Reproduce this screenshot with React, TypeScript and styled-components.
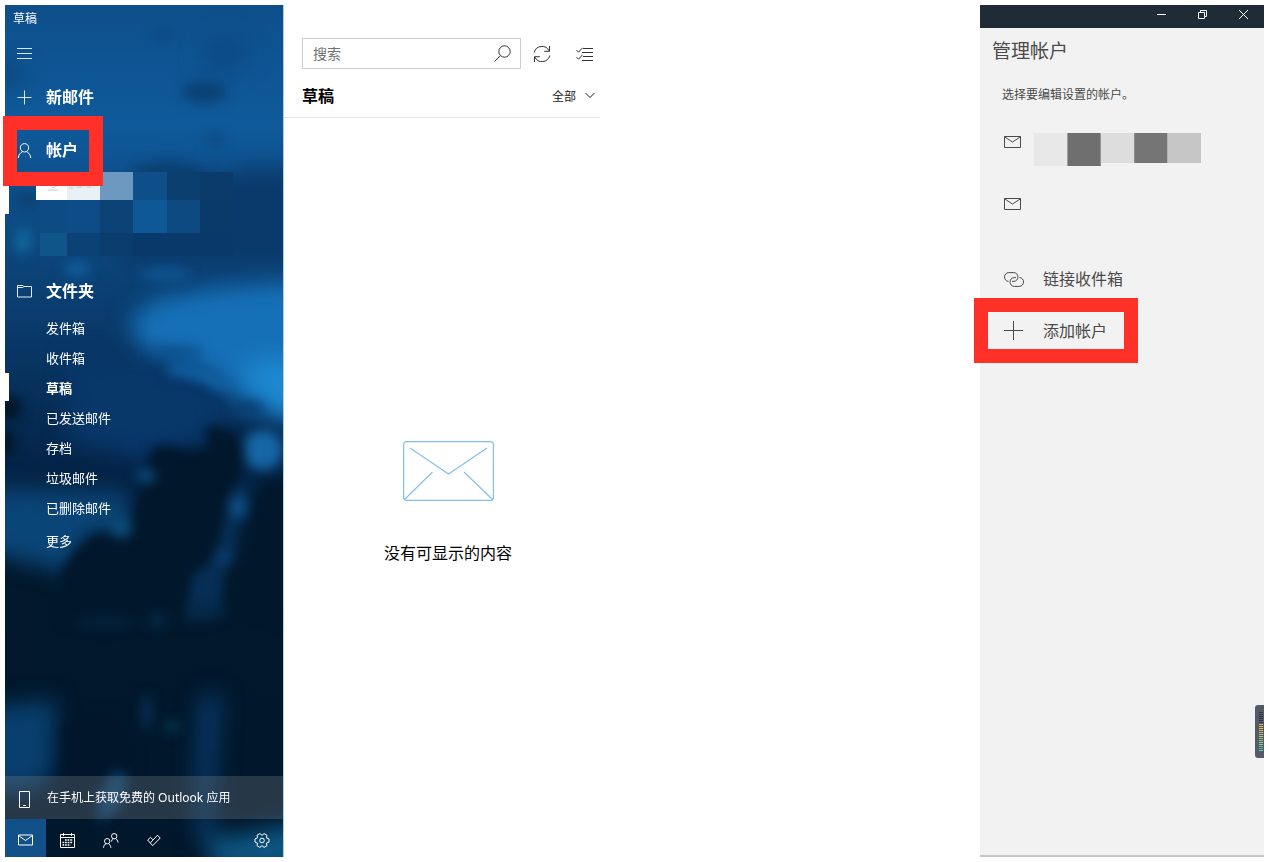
import React from 'react';
import styled, { createGlobalStyle, css } from 'styled-components';

const GlobalStyle = createGlobalStyle`
  *, *::before, *::after { box-sizing: border-box; }
  body {
    margin: 0;
    background: #ffffff;
    color: #000000;
    font-family: "Noto Sans", "Noto Sans CJK SC", sans-serif;
    font-size: 14px;
  }
  button, input, select { font: inherit; color: inherit; }
  svg { display: block; flex: none; }
`;

const Desktop = styled.div`
  display: flex;
  min-height: 100vh;
  padding: 5px;
`;

/* ---------- sidebar ---------- */

const Sidebar = styled.aside`
  position: relative;
  isolation: isolate;
  display: flex;
  flex-direction: column;
  flex: none;
  width: 278px;
  color: #ffffff;
`;

const Backdrop = styled.svg`
  position: absolute;
  inset: 0;
  z-index: -1;
  width: 100%;
  height: 100%;
`;

const WindowTitle = styled.div`
  height: 26px;
  padding-left: 8px;
  font-size: 12px;
  line-height: 28px;
`;

const plainButton = css`
  border: 0;
  background: none;
  padding: 0;
  cursor: pointer;
`;

const NavButton = styled.button<{ $gap?: number }>`
  ${plainButton}
  position: relative;
  display: flex;
  align-items: center;
  width: 100%;
  height: 44px;
  margin-top: ${(p) => p.$gap ?? 0}px;
  padding-left: 12px;
  gap: 14px;
  font-size: 16px;
  font-weight: 700;
  line-height: 24px;
  text-align: left;
`;

const Highlight = styled.span<{ $top: number; $left: number; $width: number; $height: number }>`
  position: absolute;
  z-index: 1;
  top: ${(p) => p.$top}px;
  left: ${(p) => p.$left}px;
  width: ${(p) => p.$width}px;
  height: ${(p) => p.$height}px;
  border: 14px solid #ff3028;
  pointer-events: none;
`;

const AccountMosaic = styled.svg`
  width: 100%;
  height: 84px;
  margin-bottom: 13px;
`;

const FolderList = styled.ul`
  list-style: none;
  margin: 0;
  padding: 0;
`;

const FolderLink = styled.a<{ $current?: boolean; $tall?: boolean }>`
  position: relative;
  display: block;
  padding-left: 41px;
  font-size: 13px;
  line-height: ${(p) => (p.$tall ? 36 : 30)}px;
  color: #ffffff;
  text-decoration: none;
  font-weight: ${(p) => (p.$current ? 700 : 400)};
  ${(p) =>
    p.$current &&
    css`
      &::before {
        content: '';
        position: absolute;
        left: 0;
        top: 0;
        width: 4px;
        height: 28px;
        background: #ffffff;
      }
    `}
`;

const Promo = styled.a`
  display: flex;
  align-items: center;
  gap: 13px;
  height: 43px;
  margin-top: auto;
  padding: 4px 0 0 10px;
  background: rgba(110, 120, 130, 0.34);
  color: #ffffff;
  font-size: 12px;
  line-height: 18px;
  text-decoration: none;
`;

const PromoText = styled.span`
  padding-bottom: 4px;
`;

const AppBar = styled.nav`
  display: flex;
  height: 38px;
`;

const AppButton = styled.button<{ $active?: boolean; $last?: boolean }>`
  ${plainButton}
  display: flex;
  align-items: center;
  justify-content: center;
  width: ${(p) => (p.$active ? 41 : 43)}px;
  margin-left: ${(p) => (p.$last ? 'auto' : 0)};
  padding-top: 4px;
  background: ${(p) => (p.$active ? '#115088' : 'none')};
`;

/* ---------- message list ---------- */

const ListPane = styled.main`
  display: flex;
  flex-direction: column;
  flex: none;
  width: 331px;
  border-left: 1px solid #b5cce0;
`;

const Toolbar = styled.div`
  display: flex;
  align-items: center;
  margin-top: 33px;
  padding-left: 18px;
`;

const SearchBox = styled.form`
  display: flex;
  align-items: center;
  width: 219px;
  height: 31px;
  border: 1px solid #cfcfcf;
`;

const SearchInput = styled.input`
  flex: 1;
  min-width: 0;
  height: 100%;
  padding: 0 0 1px 10px;
  border: 0;
  outline: 0;
  background: none;
  &::placeholder { color: #707070; opacity: 1; }
`;

const IconButton = styled.button`
  ${plainButton}
  display: flex;
  align-items: center;
  justify-content: center;
  width: 43px;
  height: 31px;
  padding-right: 2px;
  color: #333333;
`;

const SearchButton = styled(IconButton)`
  width: 37px;
  padding: 0 0 1px 1px;
`;

const ListHeader = styled.div`
  display: flex;
  align-items: center;
  justify-content: space-between;
  height: 49px;
  margin-right: 14px;
  padding: 6px 5px 0 18px;
  border-bottom: 1px solid #e6e6e6;
`;

const ListTitle = styled.h1`
  margin: 0;
  font-size: 16px;
  line-height: 24px;
`;

const FilterField = styled.label`
  position: relative;
  display: block;
  color: #1a1a1a;
  svg {
    position: absolute;
    right: 0;
    top: 6px;
    pointer-events: none;
  }
`;

const FilterSelect = styled.select`
  appearance: none;
  width: 43px;
  height: 20px;
  padding: 0;
  border: 0;
  background: none;
  font-size: 12px;
`;

const EmptyState = styled.section`
  display: flex;
  flex: 1;
  flex-direction: column;
  align-items: center;
  justify-content: center;
  gap: 40px;
  padding: 31px 2px 0 0;
  p { margin: 0; font-size: 16px; line-height: 24px; }
`;

/* ---------- account panel ---------- */

const Panel = styled.aside`
  position: relative;
  display: flex;
  flex-direction: column;
  flex: none;
  width: 284px;
  margin-left: auto;
  background: #f2f2f2;
  border-bottom: 2px solid #c6c6c6;
  color: #4a4a4a;
`;

const WindowBar = styled.div`
  display: flex;
  justify-content: flex-end;
  height: 23px;
  background: #1f2b37;
  color: #ffffff;
`;

const WindowButton = styled.button`
  ${plainButton}
  display: flex;
  justify-content: center;
  width: 41px;
  padding-top: 4px;
`;

const PanelTitle = styled.h2`
  margin: 9px 0 0 12px;
  font-size: 19px;
  font-weight: 400;
  line-height: 28px;
`;

const PanelHint = styled.p`
  margin: 20px 0 0 22px;
  font-size: 12px;
  line-height: 20px;
`;

const AccountList = styled.ul`
  list-style: none;
  margin: 6px 0 0;
  padding: 0;
`;

const AccountButton = styled.button`
  ${plainButton}
  display: flex;
  align-items: center;
  gap: 13px;
  width: 100%;
  height: 62px;
  padding-left: 24px;
`;

const PanelAction = styled.button<{ $gap: number }>`
  ${plainButton}
  position: relative;
  display: flex;
  align-items: center;
  gap: 19px;
  width: 100%;
  height: 36px;
  margin-top: ${(p) => p.$gap}px;
  padding-left: 24px;
  font-size: 16px;
  line-height: 24px;
`;

const LevelMeter = styled.svg`
  position: absolute;
  right: 0;
  bottom: 97px;
`;

/* ---------- icons ---------- */

type IconProps = { w: number; h: number; children: React.ReactNode };

const Icon = ({ w, h, children }: IconProps) => (
  <svg width={w} height={h} viewBox={`0 0 ${w} ${h}`} fill="none" stroke="currentColor" strokeLinejoin="round" aria-hidden="true">
    {children}
  </svg>
);

const MenuIcon = () => <Icon w={15} h={11}><path d="M0 .5h15M0 5.5h15M0 10.5h15" opacity=".85" /></Icon>;
const PlusIcon = () => <Icon w={15} h={15}><path d="M.5 7.5h14M7.5.5v14" opacity=".85" /></Icon>;
const BigPlusIcon = () => <Icon w={20} h={20}><path d="M0 9.5h19M9.5 0v19" /></Icon>;
const PersonIcon = () => (
  <Icon w={15} h={15}><circle cx="7.5" cy="4.8" r="4.2" /><path d="M1.2 15c.4-3.2 2-5.2 4.2-6.3M13.8 15c-.4-3.2-2-5.2-4.2-6.3" /></Icon>
);
const FolderIcon = () => (
  <Icon w={15} h={14}><path d="M.5 1.5h5.500l1 1h7.500v10.500H.5zM.5 3.500h5l1.500-1" opacity=".9" /></Icon>
);
const PhoneIcon = () => <Icon w={19} h={17}><path d="M4.5.5h10v16h-10zM8 14.500h3" /></Icon>;
const MailIcon = () => <Icon w={15} h={12}><path d="M.5 1h14v10H.5zM.5 1.500l7 5 7-5" /></Icon>;
const PanelMailIcon = () => <Icon w={17} h={12}><path d="M.5.5h16v11H.5zM.5.8l8 5.200 8-5.200" /></Icon>;
const CalendarIcon = () => (
  <Icon w={15} h={15}>
    <path d="M.5 1.500h14v13H.5zM.5 4.500h14M3.500 0v3M11.500 0v3" />
    <path d="M5 7h8M2.500 9.500H13M2.500 12h8" strokeWidth="1.600" strokeDasharray="1.700 .9" />
  </Icon>
);
const PeopleIcon = () => (
  <Icon w={16} h={15}>
    <circle cx="4.2" cy="8.2" r="2.700" /><path d="M.5 14.800c.2-2.200 1.300-3.600 2.500-4.200M7.900 14.800c-.2-2.200-1.300-3.600-2.500-4.200" />
    <circle cx="11.2" cy="3.2" r="2.700" /><path d="M8.500 8.500c.3-1.400.8-2.300 1.500-2.900M15 9.500c-.2-2-1.200-3.300-2.500-3.900" />
  </Icon>
);
const TodoIcon = () => (
  <Icon w={14} h={13}>
    <path d="M6 5.800L3.500 3.300.7 6.100l5 5.600M5.700 11.700l7.500-7.700-2.700-2.800-7 7.500" />
  </Icon>
);
const GearIcon = () => (
  <Icon w={16} h={15}>
    <path d="M15 9.100V5.900L12.500 4.900 12.900 2.200 10.100.6 8 2.300 5.900.6 3.100 2.200 3.500 4.900 1 5.900v3.200l2.500 1-.4 2.700 2.800 1.600L8 12.700l2.100 1.700 2.800-1.600-.4-2.700z" />
    <circle cx="8" cy="7.500" r="2.300" />
  </Icon>
);
const SearchIcon = () => <Icon w={17} h={17}><circle cx="10.5" cy="6.500" r="5.700" /><path d="M6.500 10.500L.6 16.400" /></Icon>;
const SyncIcon = () => (
  <Icon w={18} h={18}>
    <path d="M1.200 7.500a8 8 0 0 1 15-1.500M16.800 10.500a8 8 0 0 1-15 1.500M16.500 1v5.300h-5.300M1.500 17v-5.300h5.300" />
  </Icon>
);
const SelectIcon = () => (
  <Icon w={17} h={14}>
    <path d="M7 1.500h10M6 5.500h11M7 9.500h10M6 13.500h11M.5 3.200l2 2L6.500.8M.5 10.200l2 2 4-4.400" />
  </Icon>
);
const ChevronIcon = () => <Icon w={10} h={7}><path d="M.5 1l4.500 4.500L9.500 1" /></Icon>;
const LinkIcon = () => (
  <Icon w={20} h={15}>
    <path d="M4.500 9.300C1.800 9.300.5 7 .5 5S2 .6 4.700.6h5c2.700 0 4.200 2.100 4.200 4.300S12.500 9.300 9.800 9.300H8" />
    <path d="M15.500 5.600c2.700 0 4 2.200 4 4.400s-1.500 4.400-4.200 4.400h-5c-2.700 0-4.200-2.100-4.200-4.300s1.400-4.500 4.100-4.500H12" />
  </Icon>
);

const EnvelopeArt = () => (
  <svg width="91" height="60" viewBox="0 0 91 60" fill="none" stroke="#84bfe9" strokeWidth="1.200" aria-hidden="true">
    <rect x=".6" y=".6" width="89.800" height="58.800" rx="3" />
    <path d="M7 7l38.500 26L84 7M1.500 58.500L29.500 31M89.500 58.500L61 31" />
  </svg>
);

const NightSky = () => (
  <Backdrop viewBox="5 5 278 852" preserveAspectRatio="none" aria-hidden="true">
    <defs>
      <linearGradient id="sky" x1="0" y1="0" x2="0" y2="1">
        <stop offset="0" stopColor="#0d4f8b" />
        <stop offset=".14" stopColor="#0f5a9b" />
        <stop offset=".24" stopColor="#0d4c86" />
        <stop offset=".34" stopColor="#0a3f72" />
        <stop offset=".45" stopColor="#07305b" />
        <stop offset=".54" stopColor="#042448" />
        <stop offset=".66" stopColor="#02182c" />
        <stop offset="1" stopColor="#01172b" />
      </linearGradient>
      <filter id="soft" filterUnits="userSpaceOnUse" x="-60" y="-60" width="420" height="1000" colorInterpolationFilters="sRGB">
        <feGaussianBlur stdDeviation="6" />
      </filter>
      <filter id="softer" filterUnits="userSpaceOnUse" x="-60" y="-60" width="420" height="1000" colorInterpolationFilters="sRGB">
        <feGaussianBlur stdDeviation="11" />
      </filter>
    </defs>
    <rect x="5" y="5" width="278" height="852" fill="url(#sky)" />
    <g filter="url(#softer)">
      <path d="M125 176l50-8 40 10 40-12 60 4v96H120z" fill="#0a3a6b" />
      <ellipse cx="225" cy="55" rx="24" ry="18" fill="#0c4780" opacity=".7" />
      <ellipse cx="8" cy="75" rx="16" ry="8" fill="#0b3f72" />
      <path d="M128 322l25-22 60-12 100-8v150l-70-22-30-34-35-16-35-8z" fill="#1670b7" />
      <path d="M240 370q40-24 70 0v45l-40-5z" fill="#1d88d0" />
      <path d="M70 355l80 5 55 20 30 45-80 35-90-20z" fill="#08376a" />
      <path d="M-20 488l150 4-2 38-40 5-15 40-93-25z" fill="#0a4577" />
      <path d="M-20 708l76-8-2 70-20 22h-54z" fill="#083f6e" />
      <path d="M200 695l22 0-6 70-4 75h-16l0-80z" fill="#083868" />
      <path d="M205 838l40-4 60-12v50h-90z" fill="#0d5683" />
    </g>
    <g filter="url(#soft)">
      <ellipse cx="204" cy="92" rx="23" ry="11" fill="#0b4174" />
      <ellipse cx="215" cy="140" rx="10" ry="6" fill="#0c4880" />
      <ellipse cx="163" cy="35" rx="10" ry="6" fill="#0c4a82" />
      <path d="M140 168q30-10 70 4l-20 8h-50z" fill="#0b4072" />
      <ellipse cx="28" cy="200" rx="13" ry="7" fill="#0b4071" />
      <ellipse cx="23" cy="241" rx="9" ry="13" fill="#11659b" />
      <ellipse cx="77" cy="269" rx="13" ry="8" fill="#115c99" />
      <ellipse cx="165" cy="274" rx="26" ry="6" fill="#0f5794" />
      <ellipse cx="178" cy="352" rx="26" ry="6" fill="#0d5190" />
      <path d="M168 366q34-4 66 22l-14 2q-22-14-52-16z" fill="#1265aa" />
      <ellipse cx="248" cy="409" rx="16" ry="8" fill="#0a4073" />
      <ellipse cx="10" cy="408" rx="12" ry="12" fill="#021527" />
      <ellipse cx="6" cy="443" rx="9" ry="13" fill="#021527" />
      <ellipse cx="263" cy="450" rx="20" ry="20" fill="#1665a5" />
      <path d="M152 448l12-3 30 6 16-4-6-18 16-4 22 14 4 18-8 16 12 20-18 22-6 34-14 30-8 42-140 2-4-50 14-22 20-16 24 0 16-18 6-30z" fill="#01172b" />
      <path d="M310 478l-45 2-12 22-4 42-16 60 80 30z" fill="#01172b" />
      <path d="M232 488q12-10 16-6l0 28-12 20-1 26-10 10-6 52-34 2 8-46 22-14 8-34z" fill="#093a69" opacity=".7" />
      <ellipse cx="238" cy="507" rx="9" ry="11" fill="#0e5088" />
      <ellipse cx="223" cy="558" rx="10" ry="9" fill="#0a3b6e" />
      <ellipse cx="146" cy="476" rx="10" ry="7" fill="#0c4b7b" />
      <ellipse cx="121" cy="527" rx="11" ry="11" fill="#0c4d7c" />
      <ellipse cx="157" cy="620" rx="11" ry="8" fill="#042744" />
      <ellipse cx="105" cy="622" rx="30" ry="6" fill="#03233c" />
      <ellipse cx="205" cy="610" rx="20" ry="10" fill="#042a4a" />
      <ellipse cx="147" cy="712" rx="5" ry="18" fill="#073158" />
      <ellipse cx="172" cy="727" rx="8" ry="6" fill="#063a50" />
      <path d="M98 796l18-30 12 14-6 28-24 14z" fill="#0a426e" />
      <path d="M64 722l50-10 24 50-26 12-22 22-28-20z" fill="#01162b" />
    </g>
  </Backdrop>
);

const mosaicCells: [number, number, number, number, string][] = [
  [31, 0, 31, 28, '#ffffff'], [62, 0, 33, 28, '#e9f0f6'], [95, 0, 33, 28, '#6d99c1'],
  [128, 0, 34, 28, '#0e4f89'], [162, 0, 33, 28, '#0a3f70'], [195, 0, 33, 28, '#0a3b6a'],
  [35, 28, 27, 33, '#0d4b84'], [62, 28, 33, 33, '#0d4c87'], [95, 28, 33, 33, '#0b4376'],
  [128, 28, 34, 33, '#0f5897'], [162, 28, 33, 33, '#0d4a82'], [195, 28, 33, 33, '#0a3a6a'],
  [35, 61, 27, 23, '#10558a'], [62, 61, 33, 23, '#0b4275'], [95, 61, 33, 23, '#0a3d6d'],
  [128, 61, 100, 23, '#09396a'],
];

const panelCells = ['#e8e8e8', '#6f6f6f', '#dddddd', '#757575', '#c6c6c6'];

const folders = ['发件箱', '收件箱', '草稿', '已发送邮件', '存档', '垃圾邮件', '已删除邮件'];

const meterColors = [
  '#343949', '#343949', '#2d3241', '#2d3241', '#2d3241', '#343949', '#d9b443', '#d9b443', '#dcc04c',
  '#c8b65a', '#b9bc66', '#b5c46a', '#b7ca72', '#94c16f', '#8fbe78', '#86d58c', '#74d99a', '#55c0a4', '#4bb6a6', '#5ad6b4',
];

export default function App() {
  return (
    <>
      <GlobalStyle />
      <Desktop>
        <Sidebar>
          <NightSky />
          <WindowTitle>草稿</WindowTitle>
          <NavButton aria-label="菜单"><MenuIcon /></NavButton>
          <NavButton><PlusIcon />新邮件</NavButton>
          <NavButton $gap={9}>
            <PersonIcon />帐户
            <Highlight $top={-12} $left={-2} $width={100} $height={70} />
          </NavButton>
          <AccountMosaic viewBox="0 0 278 84" preserveAspectRatio="none" aria-hidden="true">
            {mosaicCells.map(([x, y, w, h, fill]) => (
              <rect key={`${x}-${y}`} x={x} y={y} width={w} height={h} fill={fill} />
            ))}
            <path d="M0 0h4v42H0z" fill="#ffffff" />
            <path d="M43 18h10M47 16l5-2M64 16h4M72 15h5M82 15h4" stroke="#bccddd" fill="none" />
          </AccountMosaic>
          <NavButton><FolderIcon />文件夹</NavButton>
          <FolderList>
            {folders.map((name) => (
              <li key={name}><FolderLink href="#" $current={name === '草稿'}>{name}</FolderLink></li>
            ))}
            <li><FolderLink href="#" $tall>更多</FolderLink></li>
          </FolderList>
          <Promo href="#"><PhoneIcon /><PromoText>在手机上获取免费的 Outlook 应用</PromoText></Promo>
          <AppBar aria-label="应用">
            <AppButton $active aria-label="邮件"><MailIcon /></AppButton>
            <AppButton aria-label="日历"><CalendarIcon /></AppButton>
            <AppButton aria-label="人脉"><PeopleIcon /></AppButton>
            <AppButton aria-label="待办"><TodoIcon /></AppButton>
            <AppButton $last aria-label="设置"><GearIcon /></AppButton>
          </AppBar>
        </Sidebar>

        <ListPane>
          <Toolbar>
            <SearchBox role="search">
              <SearchInput type="text" placeholder="搜索" aria-label="搜索" />
              <SearchButton type="button" aria-label="开始搜索"><SearchIcon /></SearchButton>
            </SearchBox>
            <IconButton aria-label="同步"><SyncIcon /></IconButton>
            <IconButton aria-label="选择"><SelectIcon /></IconButton>
          </Toolbar>
          <ListHeader>
            <ListTitle>草稿</ListTitle>
            <FilterField>
              <FilterSelect aria-label="筛选" defaultValue="all">
                <option value="all">全部</option>
              </FilterSelect>
              <ChevronIcon />
            </FilterField>
          </ListHeader>
          <EmptyState>
            <EnvelopeArt />
            <p>没有可显示的内容</p>
          </EmptyState>
        </ListPane>

        <Panel>
          <WindowBar>
            <WindowButton aria-label="最小化"><Icon w={11} h={11}><path d="M1 5.500h9" /></Icon></WindowButton>
            <WindowButton aria-label="还原"><Icon w={11} h={11}><path d="M1.500 3.500h6v6h-6zM3.500 3.500v-2h6v6h-2" /></Icon></WindowButton>
            <WindowButton aria-label="关闭"><Icon w={11} h={11}><path d="M1 1l9 9M10 1l-9 9" /></Icon></WindowButton>
          </WindowBar>
          <PanelTitle>管理帐户</PanelTitle>
          <PanelHint>选择要编辑设置的帐户。</PanelHint>
          <AccountList>
            <li>
              <AccountButton aria-label="帐户 1">
                <PanelMailIcon />
                <svg width="167" height="48" viewBox="0 0 167 48" aria-hidden="true">
                  {panelCells.map((fill, i) => (
                    <rect key={i} x={i * 33.4} y={15} width={33.4} height={i < 2 ? 33 : 30} fill={fill} />
                  ))}
                </svg>
              </AccountButton>
            </li>
            <li><AccountButton aria-label="帐户 2"><PanelMailIcon /></AccountButton></li>
          </AccountList>
          <PanelAction $gap={26}><LinkIcon />链接收件箱</PanelAction>
          <PanelAction $gap={16}>
            <BigPlusIcon />添加帐户
            <Highlight $top={-15} $left={-6} $width={164} $height={65} />
          </PanelAction>
          <LevelMeter width="9" height="53" viewBox="0 0 9 53" aria-hidden="true">
            <path d="M9 0H3Q0 0 0 3v47q0 3 3 3h6z" fill="#555a69" />
            {meterColors.map((fill, i) => (
              <rect key={i} x="4" y={7 + i * 2} width="4" height="1" fill={fill} />
            ))}
          </LevelMeter>
        </Panel>
      </Desktop>
    </>
  );
}
